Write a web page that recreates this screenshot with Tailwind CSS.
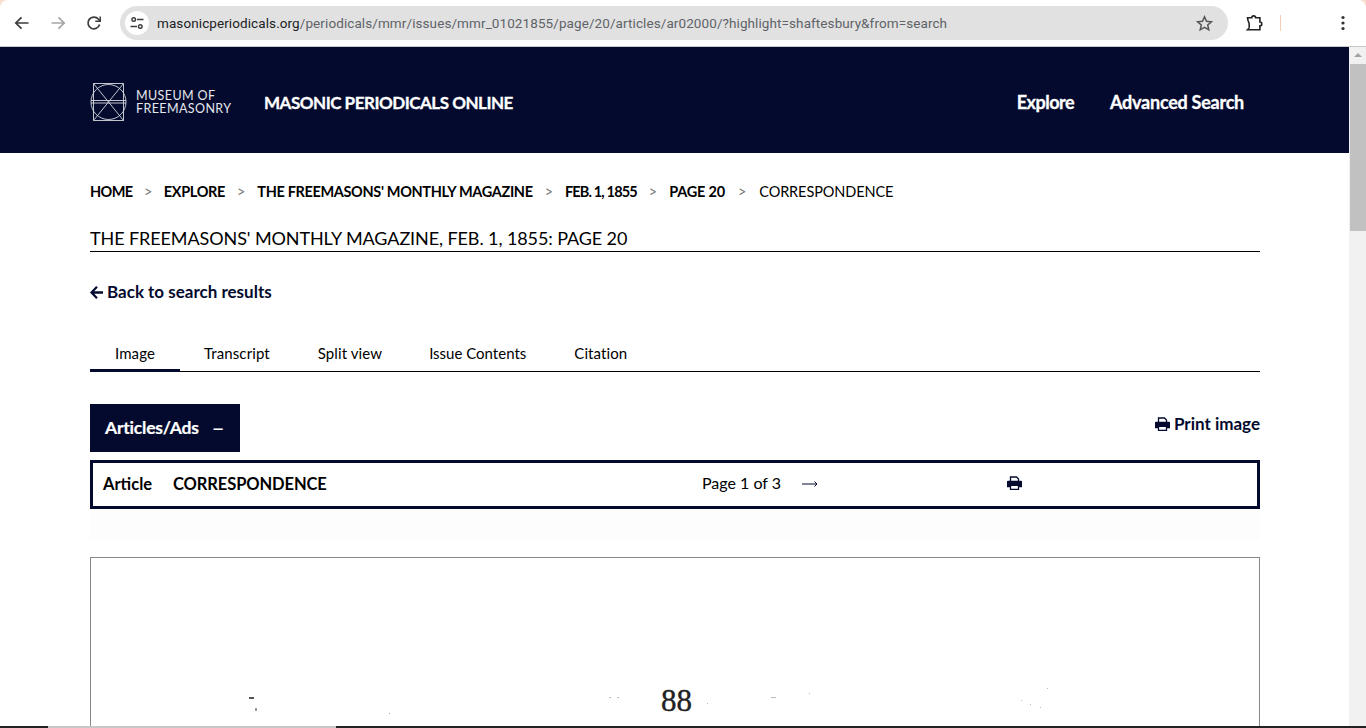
<!DOCTYPE html>
<html lang="en">
<head>
<meta charset="utf-8">
<title>Masonic Periodicals Online</title>
<script src="https://cdn.jsdelivr.net/npm/@tailwindcss/browser@4"></script>
</head>
<body class="m-0 overflow-hidden bg-white font-['Lato','Liberation_Sans',sans-serif] text-black">
<div class="flex h-[728px] w-[1366px] flex-col overflow-hidden bg-[#f9dfcd]">
  <!-- browser toolbar -->
  <div class="flex h-[47px] shrink-0 items-center rounded-t-[8px] border-b border-[#c8c8c8] bg-white">
    <div class="flex w-[120px] shrink-0 items-center pl-[13px]">
      <svg class="h-[18px] w-[18px]" viewBox="0 0 18 18" fill="none" stroke="#3c3c3c" stroke-width="1.7"><path d="M15.5 9H3M8.5 3.3 2.800 9l5.700 5.700"/></svg>
      <svg class="ml-[18px] h-[18px] w-[18px]" viewBox="0 0 18 18" fill="none" stroke="#a6a6a6" stroke-width="1.7"><path d="M2.500 9H15M9.500 3.300 15.200 9l-5.700 5.700"/></svg>
      <svg class="ml-[18px] h-[18px] w-[18px]" viewBox="0 0 18 18" fill="none" stroke="#3c3c3c" stroke-width="1.7"><path d="M14.600 10.500A5.900 5.900 0 1 1 13.300 5L15 6.800"/><path d="M15.200 2.400v4.900h-4.900" stroke-width="1.5"/></svg>
    </div>
    <div class="flex h-[34px] w-[1108px] shrink-0 items-center rounded-full bg-[#e1e1e1] pl-[5px]">
      <div class="flex h-[24px] w-[24px] items-center justify-center rounded-full bg-white">
        <svg class="h-[14px] w-[14px]" viewBox="0 0 14 14" fill="none" stroke="#3c3c3c" stroke-width="1.4"><circle cx="3.700" cy="3.500" r="1.800"/><path d="M7 3.500h6.500M.5 10.500H7"/><circle cx="10.300" cy="10.500" r="1.800"/></svg>
      </div>
      <div class="ml-[8px] whitespace-nowrap font-['Roboto',sans-serif] text-[13.5px] tracking-[0.09px] text-[#5f6368]"><span class="text-[#202124]">masonicperiodicals.org</span>/periodicals/mmr/issues/mmr_01021855/page/20/articles/ar02000/?highlight=shaftesbury&amp;from=search</div>
      <svg class="ml-auto mr-[15px] h-[17px] w-[17px]" viewBox="0 0 17 17" fill="none" stroke="#555" stroke-width="1.5"><path d="m8.500 1.800 2 4.500 4.900.5-3.700 3.200 1.100 4.800-4.300-2.500-4.300 2.500 1.100-4.800L1.600 6.800l4.900-.5z"/></svg>
    </div>
    <svg class="ml-[17px] h-[18px] w-[18px]" viewBox="0 0 18 18" fill="none" stroke="#222" stroke-width="1.600"><path d="M2.500 3.800h4.300a1.900 1.900 0 0 1 3.800 0h4.300V8a1.900 1.900 0 0 1 0 3.800v4H2.500c1-1 2-2 1.700-2.700V9.500C3.500 8 2.500 6 2.500 3.800z"/></svg>
    <div class="ml-[17px] h-[16px] w-px bg-[#f6cdb4]"></div>
    <svg class="ml-[60px] h-[16px] w-[4px]" viewBox="0 0 4 16" fill="#333"><circle cx="2" cy="2.500" r="1.600"/><circle cx="2" cy="8" r="1.600"/><circle cx="2" cy="13.500" r="1.600"/></svg>
  </div>

  <div class="flex min-h-0 flex-1 bg-white">
    <div class="min-w-0 flex-1 overflow-hidden">
      <!-- site header -->
      <header class="flex h-[106px] items-center bg-[#030a2e] pl-[90px] pr-[105px] pt-[4px] text-white">
        <svg class="h-[38px] w-[37px] shrink-0" viewBox="0 0 37 38" fill="none" stroke="#d8d9e0" stroke-width="0.9"><circle cx="18.500" cy="19" r="17.500"/><path d="M3.500.5h30v37h-30zM3.500.5l30 37M33.500.5l-30 37M1 17.500h35M1 20h35"/></svg>
        <div class="ml-[9px] w-[105px] text-[12.5px] leading-[13px] tracking-[0.4px] text-[#e6e7ec]">MUSEUM OF<br>FREEMASONRY</div>
        <div class="ml-[23px] mt-[2px] whitespace-nowrap text-[17px] font-bold tracking-[-0.48px] [-webkit-text-stroke:0.3px_white]">MASONIC PERIODICALS ONLINE</div>
        <nav class="ml-auto flex items-center gap-[36px] text-[18px] font-bold tracking-[-0.25px] [-webkit-text-stroke:0.3px_white]">
          <a class="tracking-[-0.5px]">Explore</a>
          <a>Advanced Search</a>
        </nav>
      </header>

      <main class="pl-[90px] pr-[89px]">
        <div class="flex h-[20px] mt-[29px] items-center whitespace-nowrap text-[14.5px] tracking-[-0.1px]">
          <b class="tracking-[-0.6px]">HOME</b><span class="mx-[11.5px] text-[#777]">&gt;</span><b class="tracking-[-0.35px]">EXPLORE</b><span class="mx-[12px] text-[#777]">&gt;</span><b class="tracking-[-0.35px]">THE FREEMASONS' MONTHLY MAGAZINE</b><span class="mx-[12px] text-[#777]">&gt;</span><b class="tracking-[-0.85px]">FEB. 1, 1855</b><span class="mx-[12px] text-[#777]">&gt;</span><b class="tracking-[-0.2px]">PAGE 20</b><span class="mx-[13px] text-[#777]">&gt;</span><span>CORRESPONDENCE</span>
        </div>
        <h1 class="mt-[24px] h-[26px] border-b border-black text-[18px] font-normal leading-[24px] tracking-[-0.1px]">THE FREEMASONS' MONTHLY MAGAZINE, FEB. 1, 1855: PAGE 20</h1>

        <a class="mt-[29px] flex h-[22px] items-center text-[17px] font-bold text-[#030a2e]">
          <svg class="mr-[4px] h-[13px] w-[13px]" viewBox="0 0 13 13" fill="#030a2e"><path d="M6.200 0 7.800 1.600 4.200 5.200H13v2.600H4.200l3.600 3.600L6.200 13 0 6.500z"/></svg>Back to search results
        </a>

        <div class="mt-[40px] flex h-[29px] border-b border-black text-[15px] leading-[20px] tracking-[0.1px]">
          <div class="-mb-px flex h-[29px] w-[90px] justify-center border-b-[3px] border-[#030a2e]">Image</div>
          <div class="ml-[24px]">Transcript</div>
          <div class="ml-[48px]">Split view</div>
          <div class="ml-[47px] tracking-normal">Issue Contents</div>
          <div class="ml-[48px]">Citation</div>
        </div>

        <div class="mt-[32px] flex items-start justify-between">
          <div class="flex h-[48px] w-[150px] items-center bg-[#030a2e] pl-[15px] text-[17.5px] font-bold tracking-[-0.2px] text-white [-webkit-text-stroke:0.2px_white]">Articles/Ads<span class="ml-[14px] scale-x-125">–</span></div>
          <a class="mt-[9px] flex h-[22px] items-center text-[17px] font-bold text-[#030a2e]">
            <svg class="mr-[4px] h-[14px] w-[15px]" viewBox="0 0 15 14" fill="none" stroke="#030a2e" stroke-width="1.300"><path d="M3.500 5.500V1h6l2 2v2.500"/><path d="M1 5.500h13a.7.7 0 0 1 .7.7v4.300H.3V6.200a.7.7 0 0 1 .7-.7z" fill="#030a2e"/><path d="M3.500 10v3.300h8V10" fill="#fff"/></svg>Print image
          </a>
        </div>

        <div class="mt-[8px] flex h-[49px] items-center border-[3px] border-[#030a2e] pb-[1px] pl-[10px] text-[16.5px]">
          <b class="w-[70px]">Article</b>
          <b class="w-[529px] tracking-[-0.1px]">CORRESPONDENCE</b>
          <span class="-mt-[2px] w-[100px] text-[16px]">Page 1 of 3</span>
          <svg class="-mt-px h-[8px] w-[16px]" viewBox="0 0 16 8" fill="none" stroke="#030a2e" stroke-width="1"><path d="M0 4h15M12.500 1.500 15 4l-2.500 2.500"/></svg>
          <svg class="-mt-[2px] ml-[189px] h-[14px] w-[15px]" viewBox="0 0 15 14" fill="none" stroke="#030a2e" stroke-width="1.300"><path d="M3.500 5.500V1h6l2 2v2.500"/><path d="M1 5.500h13a.7.7 0 0 1 .7.7v4.300H.3V6.200a.7.7 0 0 1 .7-.7z" fill="#030a2e"/><path d="M3.500 10v3.300h8V10" fill="#fff"/></svg>
        </div>
        <div class="h-[31px] bg-[#fdfdfd]"></div>

        <div class="relative mt-[17px] h-[169px] overflow-hidden border border-b-0 border-[#888] bg-white">
          <div class="absolute left-[570px] top-[125px] font-['Liberation_Serif',serif] text-[31px] leading-[36px] text-[#222] [-webkit-text-stroke:0.4px_#222]">88</div>
          <div class="absolute left-[158px] top-[139px] h-[2px] w-[5px] bg-[#555]"></div>
          <div class="absolute left-[164px] top-[150px] h-[3px] w-[2px] bg-[#999]"></div>
          <div class="absolute left-[298px] top-[155px] h-px w-px bg-[#aaa]"></div>
          <div class="absolute left-[518px] top-[139px] h-px w-[2px] bg-[#bbb]"></div>
          <div class="absolute left-[526px] top-[139px] h-px w-[2px] bg-[#bbb]"></div>
          <div class="absolute left-[616px] top-[145px] h-px w-px bg-[#bbb]"></div>
          <div class="absolute left-[680px] top-[139px] h-px w-[5px] bg-[#bbb]"></div>
          <div class="absolute left-[718px] top-[135px] h-px w-px bg-[#bbb]"></div>
          <div class="absolute left-[930px] top-[142px] h-px w-px bg-[#bbb]"></div>
          <div class="absolute left-[939px] top-[146px] h-px w-px bg-[#bbb]"></div>
          <div class="absolute left-[949px] top-[149px] h-px w-px bg-[#bbb]"></div>
          <div class="absolute left-[956px] top-[130px] h-px w-px bg-[#bbb]"></div>
        </div>
      </main>
    </div>
    <!-- scrollbar -->
    <div class="relative w-[17px] shrink-0 bg-[#f1f1f1]">
      <div class="absolute left-[5px] top-[6px] h-0 w-0 border-x-[4px] border-b-[4px] border-x-transparent border-b-[#a3a3a3]"></div>
      <div class="absolute left-px top-[17px] h-[167px] w-[16px] bg-[#c1c1c1]"></div>
    </div>
  </div>
  <!-- window edge -->
  <div class="flex h-[2px] shrink-0 bg-[#222]">
    <div class="ml-[48px] h-full w-[288px] bg-[#c8c8c8]"></div>
  </div>
</div>
</body>
</html>
